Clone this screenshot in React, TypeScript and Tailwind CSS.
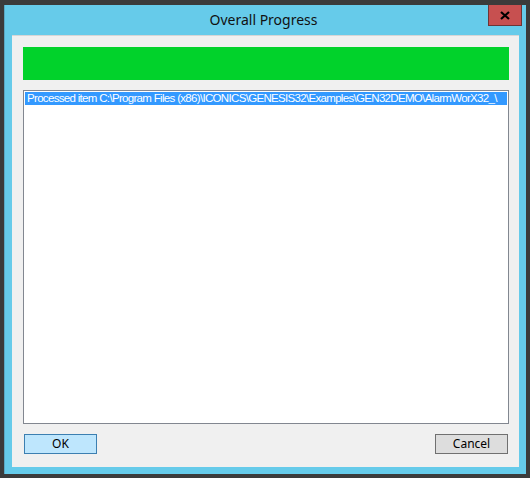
import React from "react";

export default function App() {
  const path =
    "Processed item C:\\Program Files (x86)\\ICONICS\\GENESIS32\\Examples\\GEN32DEMO\\AlarmWorX32_\\";
  return (
    <div className="w-[530px] h-[478px] bg-[#3b3b3b] pt-[5px] pl-[4px] pr-[4px] pb-[4px] flex">
      <div className="flex-1 min-w-0 flex flex-col bg-[#66cbea] border-l border-[#5aa9c4]">
        <div className="h-[30px] relative flex items-center justify-center">
          <span
            className="text-[14px] text-[#111] leading-none pr-[4px]"
            style={{ fontFamily: '"Noto Sans", sans-serif' }}
          >
            Overall Progress
          </span>
          <div className="absolute right-[4px] top-0 w-[34px] h-[21px] bg-[#c75050] border border-[#6e3535] border-t-0 flex items-center justify-center">
            <svg width="10" height="9" viewBox="0 0 10 9">
              <path d="M1 1 L9 8 M9 1 L1 8" stroke="#000" strokeWidth="2.2" />
            </svg>
          </div>
        </div>
        <div className="flex-1 min-w-0 ml-[7px] mr-[7px] mb-[7px] bg-[#f0f0f0] border-t border-[#d6d6d6] flex flex-col pl-[11px] pr-[10px] pt-[11px] pb-[13px]">
          <div className="h-[33px] bg-[#01d22b]" />
          <div className="mt-[10px] h-[334px] min-w-0 bg-white border border-[#828790] p-[1px] overflow-hidden">
            <div
              className="h-[13px] bg-[#3399ff] text-white text-[11.5px] tracking-[-0.68px] leading-[13px] whitespace-nowrap overflow-hidden pl-[2px]"
              style={{ fontFamily: '"Liberation Sans", Arial, sans-serif' }}
            >
              {path}
            </div>
          </div>
          <div
            className="mt-[10px] flex justify-between text-[12px] text-black"
            style={{ fontFamily: '"Noto Sans", sans-serif' }}
          >
            <div className="ml-[1px] w-[73px] h-[20px] bg-[#bee6fd] border border-[#3c7fb1] flex items-center justify-center">
              OK
            </div>
            <div className="mr-px w-[73px] h-[20px] bg-[#dddddd] border border-[#707070] flex items-center justify-center">
              Cancel
            </div>
          </div>
        </div>
      </div>
    </div>
  );
}
